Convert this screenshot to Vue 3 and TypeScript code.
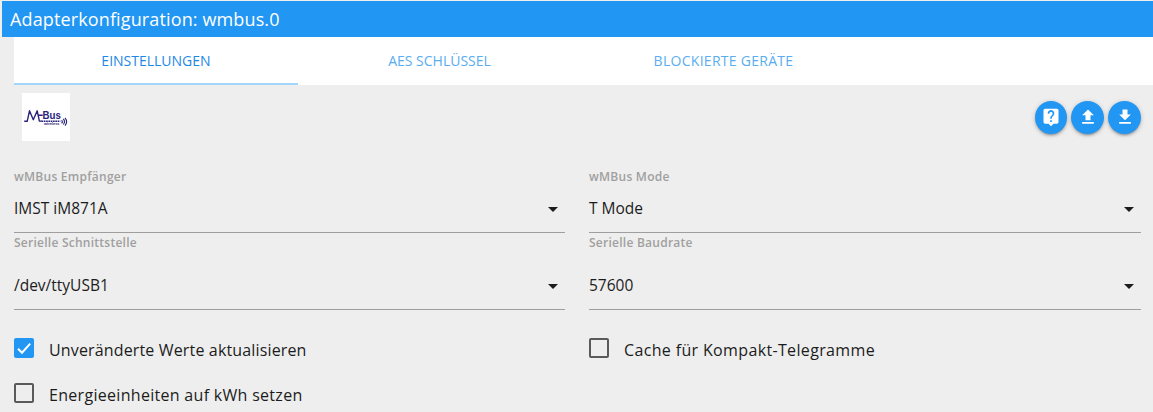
<script setup lang="ts">
interface Field { id: string; label: string; value: string }

const tabs = [
  { id: 'main', title: 'Einstellungen' },
  { id: 'aes', title: 'AES Schlüssel' },
  { id: 'blocked', title: 'Blockierte Geräte' },
]
const activeTab = 'main'

const rows: { id: string; fields: Field[] }[] = [
  {
    id: 'receiver',
    fields: [
      { id: 'device', label: 'wMBus Empfänger', value: 'IMST iM871A' },
      { id: 'mode', label: 'wMBus Mode', value: 'T Mode' },
    ],
  },
  {
    id: 'serial',
    fields: [
      { id: 'port', label: 'Serielle Schnittstelle', value: '/dev/ttyUSB1' },
      { id: 'baud', label: 'Serielle Baudrate', value: '57600' },
    ],
  },
]

const options = [
  { id: 'update', label: 'Unveränderte Werte aktualisieren', checked: true },
  { id: 'cache', label: 'Cache für Kompakt-Telegramme', checked: false },
  { id: 'kwh', label: 'Energieeinheiten auf kWh setzen', checked: false },
]

const actions = [
  { id: 'help', path: 'M19 2H5a2 2 0 0 0-2 2v14a2 2 0 0 0 2 2h4l3 3 3-3h4c1.100 0 2-.9 2-2V4a2 2 0 0 0-2-2zm-6 16h-2v-2h2v2zm2.070-7.750l-.9.920C13.450 11.900 13 12.500 13 14h-2v-.5c0-1.100.450-2.100 1.170-2.830l1.240-1.260A2 2 0 1 0 10 8H8a4 4 0 1 1 7.070 2.250z' },
  { id: 'upload', path: 'M5 20h14v-2H5v2zm0-10h4v6h6v-6h4l-7-7z' },
  { id: 'download', path: 'M19 9h-4V3H9v6H5l7 7zM5 18v2h14v-2z' },
]
</script>

<template>
  <div class="page">
    <header class="titlebar">Adapterkonfiguration: wmbus.0</header>
    <nav class="tabs">
      <a v-for="t in tabs" :key="t.id" class="tab" :class="[t.id, { active: t.id === activeTab }]">{{ t.title }}</a>
    </nav>
    <div class="toolbar">
      <svg class="logo" viewBox="0 0 48 48">
        <rect width="48" height="48" fill="#fff" />
        <path d="M2.200 28.300h3L7.500 17.800l3.800 8.900 3.900-8.900 2.200 10.300h2.400M16.700 22.300h4" fill="none" stroke="#29237c" stroke-width="1.400" stroke-linejoin="round" />
        <path d="M19.500 28.200h18.800" fill="none" stroke="#29237c" stroke-width="1.400" stroke-dasharray="1.700 .6" />
        <text x="20.500" y="26.400" class="logo-name" textLength="18.300" lengthAdjust="spacingAndGlyphs">Bus</text>
        <text x="22" y="31.800" class="logo-sub" textLength="15.500" lengthAdjust="spacingAndGlyphs">wireless</text>
        <path d="M39.700 27q1.400 1.700 0 3.400M41.300 25.900q2.400 2.800 0 5.600M43 24.800q3.200 3.900 0 7.800" fill="none" stroke="#29237c" stroke-width="1.100" />
      </svg>
      <div class="actions">
        <button v-for="a in actions" :key="a.id" class="round" :class="a.id">
          <svg viewBox="0 0 24 24"><path :d="a.path" fill="#fff" /></svg>
        </button>
      </div>
    </div>
    <main>
      <section v-for="r in rows" :key="r.id" class="row" :class="r.id">
        <div v-for="f in r.fields" :key="f.id" class="field">
          <label>{{ f.label }}</label>
          <div class="select">
            <span>{{ f.value }}</span>
            <svg class="caret" viewBox="0 0 10 5"><path d="M0 0h10L5 5z" fill="#1c1c1c" /></svg>
          </div>
        </div>
      </section>
      <section class="options">
        <div v-for="o in options" :key="o.id" class="option">
          <span class="box" :class="{ checked: o.checked }">
            <svg v-if="o.checked" viewBox="0 0 20 20"><path d="M4 10.700l4 4 8.200-9" fill="none" stroke="#fff" stroke-width="2" /></svg>
          </span>
          <span class="caption" :class="o.id">{{ o.label }}</span>
        </div>
      </section>
    </main>
  </div>
</template>

<style>
html, body { background: #eee; overflow: hidden; }
</style>

<style scoped>
.page {
  box-sizing: border-box;
  height: 412px;
  padding-top: 1px;
  overflow: hidden;
  background: #eee;
  color: #1c1c1c;
  font-family: "Open Sans", "Noto Sans", sans-serif;
}
.titlebar {
  height: 36px;
  margin-left: 2px;
  padding-left: 8px;
  background: #2196f3;
  color: #fff;
  font-size: 18px;
  line-height: 37px;
  letter-spacing: 0.130px;
}
.tabs { display: flex; height: 48px; margin-left: 14px; background: #fff; }
.tab {
  box-sizing: border-box;
  width: 284px;
  padding-right: 1px;
  color: #5aadf0;
  font-size: 14px;
  line-height: 48px;
  text-align: center;
  text-transform: uppercase;
}
.tab.blocked { letter-spacing: 0.280px; }
.tab.active { padding-right: 0; border-bottom: 2px solid #a6d5fa; color: #1e88e5; }
.toolbar { display: flex; justify-content: space-between; height: 83px; padding: 8px 12px 0 22px; box-sizing: border-box; }
.logo { width: 48px; height: 48px; }
.logo-name { font: bold 10.500px "Liberation Sans", sans-serif; fill: #29237c; }
.logo-sub { font: bold 3.600px "Liberation Sans", sans-serif; fill: #29237c; }
.actions { display: flex; gap: 4px; padding-top: 7.500px; }
.round {
  display: flex;
  align-items: center;
  justify-content: center;
  width: 33px;
  height: 33px;
  padding: 0;
  border: 0;
  border-radius: 50%;
  background: #2196f3;
  box-shadow: 0 2px 2px rgba(0, 0, 0, .14), 0 3px 1px -2px rgba(0, 0, 0, .12), 0 1px 5px rgba(0, 0, 0, .2);
}
.round.help { width: 32px; }
.round svg { width: 20px; height: 20px; }
.row { display: grid; grid-template-columns: 551px 552px; column-gap: 24px; margin-left: 14px; }
.field { display: flex; flex-direction: column; justify-content: space-between; box-sizing: border-box; border-bottom: 1px solid #9e9e9e; }
.receiver .field { height: 65px; }
.serial .field { height: 77px; }
label { color: #a0a0a0; font-size: 12px; font-weight: 600; line-height: 17px; letter-spacing: 0.250px; }
.serial label { line-height: 20px; }
.select { display: flex; align-items: center; justify-content: space-between; height: 47px; padding-right: 7px; font-size: 15.500px; }
.select span { margin-bottom: 2px; }
.caret { width: 10px; height: 5px; margin-top: 1px; }
.options { display: grid; grid-template-columns: 551px 552px; column-gap: 24px; row-gap: 25px; margin: 28px 0 0 14px; }
.option { display: flex; height: 20px; gap: 15px; }
.box { box-sizing: border-box; width: 20px; height: 20px; border: 2px solid #5a5a5a; border-radius: 2px; }
.box.checked { border: 0; background: #2196f3; }
.box svg { display: block; width: 20px; height: 20px; }
.caption { font-size: 16px; line-height: 24px; letter-spacing: 0.3px; white-space: nowrap; }
.caption.update { letter-spacing: 0.150px; }
.caption.cache { letter-spacing: 0.350px; }
</style>
